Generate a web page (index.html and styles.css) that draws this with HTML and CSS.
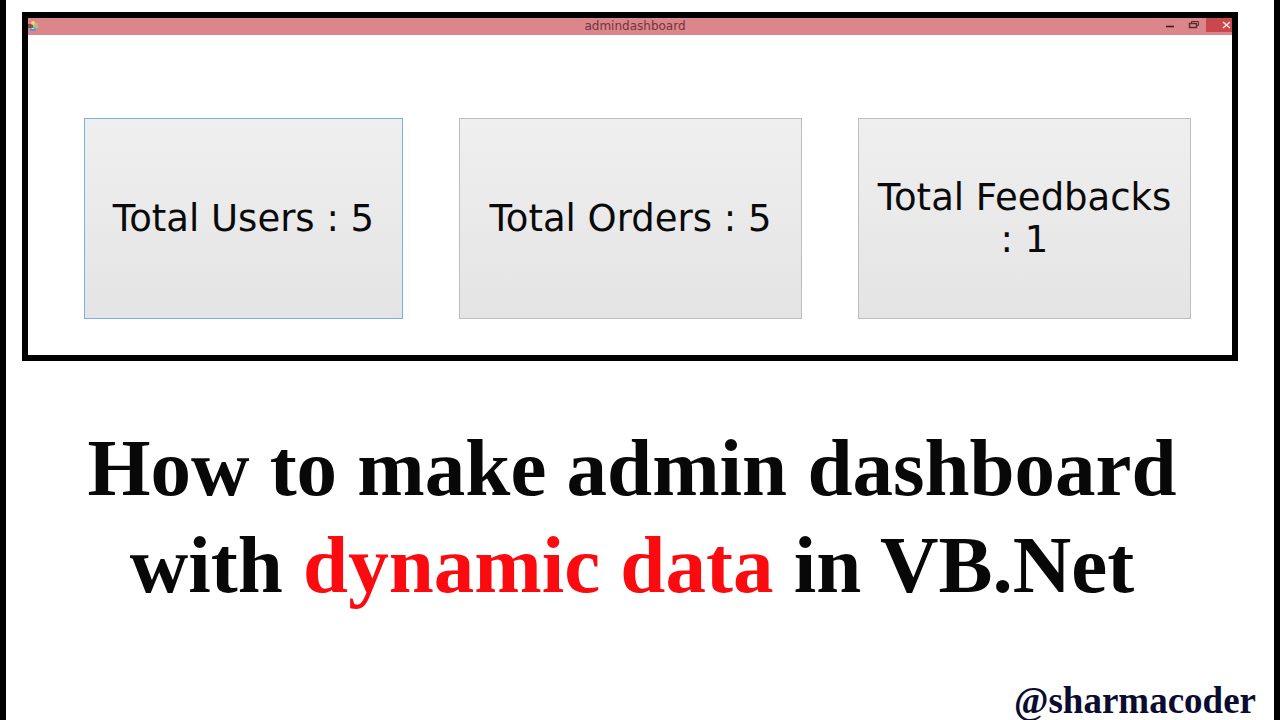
FILE: index.html
```
<!DOCTYPE html>
<html lang="en">
<head>
<meta charset="UTF-8">
<meta name="viewport" content="width=device-width, initial-scale=1.0">
<title>admindashboard</title>
<link rel="stylesheet" href="styles.css">
</head>
<body>

<div class="page">
    <section class="window">
        <header class="titlebar">
            <svg class="app-icon" viewBox="0 0 11 12" aria-hidden="true">
                <rect x="0" y="4" width="5" height="4" fill="#8a4a50"/>
                <rect x="5" y="3" width="5" height="5" fill="#b9b98c"/>
                <circle cx="5" cy="3" r="2" fill="#f3dc5a"/>
                <path d="M2 9q3-4 6 0v2H2z" fill="#4f9bc6"/>
                <path d="M3 8h4l-2 1z" fill="#e8f1f4"/>
            </svg>
            <span class="title">admindashboard</span>
            <div class="controls">
                <button type="button" class="control" aria-label="Minimize">
                    <svg width="10" height="12" viewBox="0 0 10 12"><path d="M1 8.5h8" stroke="#3c1c20" stroke-width="1.6"/></svg>
                </button>
                <button type="button" class="control" aria-label="Restore">
                    <svg width="12" height="12" viewBox="0 0 12 12" fill="none" stroke="#5a2c31"><path d="M3.5 5V3.5h7v4H9"/><path d="M1.5 5.5h7v4h-7z" stroke-width="1.4"/></svg>
                </button>
                <button type="button" class="control close" aria-label="Close">
                    <svg width="10" height="12" viewBox="0 0 10 12"><path d="M2 4l7 6M9 4l-7 6" stroke="#fbe3e3" stroke-width="1.6"/></svg>
                </button>
            </div>
        </header>
        <div class="tiles">
            <button type="button" class="tile active">Total Users : 5</button>
            <button type="button" class="tile">Total Orders : 5</button>
            <button type="button" class="tile">Total Feedbacks : 1</button>
        </div>
    </section>

    <h1>How to make admin dashboard<br>with <span class="highlight">dynamic data</span> in VB.Net</h1>

    <footer class="handle">@sharmacoder</footer>
</div>

</body>
</html>
```
FILE: styles.css
```
* {
    box-sizing: border-box;
}
body {
    margin: 0;
    background-color: #fff;
    font-family: "Liberation Serif", "Times New Roman", serif;
}
.page {
    display: flex;
    flex-direction: column;
    min-height: 100vh;
    padding: 12px 36px 1px 16px;
    border: solid #000;
    border-width: 0 6px;
}
.window {
    border: 6px solid #000;
    background-color: #fff;
    font-family: "DejaVu Sans", Verdana, sans-serif;
}
.titlebar {
    display: grid;
    grid-template-columns: 1fr auto 1fr;
    height: 17px;
    background-color: #da868a;
}
.app-icon {
    width: 11px;
    height: 12px;
    margin-top: 2px;
}
.title {
    padding-left: 10px;
    font-size: 12px;
    line-height: 17px;
    color: #70363b;
}
.controls {
    display: flex;
    justify-content: flex-end;
}
.control {
    display: flex;
    justify-content: center;
    width: 24px;
    height: 14px;
    padding: 0;
    border: none;
    background: none;
}
.control.close {
    width: 26px;
    padding-left: 14px;
    background-color: #c9484b;
}
.tiles {
    display: grid;
    grid-template-columns: 319fr 343fr 333fr;
    gap: 56px;
    padding: 83px 41px 36px 56px;
}
.tile {
    min-height: 201px;
    padding: 0 14px;
    border: 1px solid #bdbdbd;
    background: linear-gradient(#efefef, #e4e4e4);
    color: #0a0a0a;
    font-family: inherit;
    font-size: 37px;
    line-height: 42px;
}
.tile.active {
    border-color: #78b1e2;
}
h1 {
    margin: 59px 0 0 4px;
    font-size: 81px;
    line-height: 97px;
    text-align: center;
    color: #080808;
}
.highlight {
    color: #fb0b0f;
}
.handle {
    align-self: flex-end;
    margin: auto -18px 0 0;
    font-size: 37px;
    font-weight: bold;
    line-height: 37px;
    color: #0c0c30;
}
@media (max-width: 900px) {
    .tiles { grid-template-columns: 1fr; }
    h1 { font-size: 48px; line-height: 56px; }
}
```
